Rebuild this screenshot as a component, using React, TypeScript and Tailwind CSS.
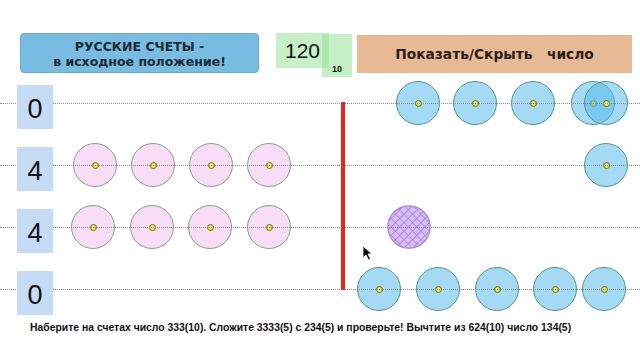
import React from "react";

type Kind = "pink" | "blue" | "hatch";
type Bead = { x: number; kind: Kind };

const ROWS: { value: string; beads: Bead[] }[] = [
  {
    value: "0",
    beads: [
      { x: 418, kind: "blue" },
      { x: 475, kind: "blue" },
      { x: 533, kind: "blue" },
      { x: 593, kind: "blue" },
      { x: 606, kind: "blue" },
    ],
  },
  {
    value: "4",
    beads: [
      { x: 95, kind: "pink" },
      { x: 153, kind: "pink" },
      { x: 211, kind: "pink" },
      { x: 269, kind: "pink" },
      { x: 606, kind: "blue" },
    ],
  },
  {
    value: "4",
    beads: [
      { x: 93, kind: "pink" },
      { x: 152, kind: "pink" },
      { x: 210, kind: "pink" },
      { x: 269, kind: "pink" },
      { x: 409, kind: "hatch" },
    ],
  },
  {
    value: "0",
    beads: [
      { x: 379, kind: "blue" },
      { x: 438, kind: "blue" },
      { x: 497, kind: "blue" },
      { x: 555, kind: "blue" },
      { x: 604, kind: "blue" },
    ],
  },
];

function BeadShape({ bead }: { bead: Bead }) {
  if (bead.kind === "hatch") {
    return (
      <svg className="absolute top-[9px]" style={{ left: bead.x - 22 }} width="44" height="44" viewBox="0 0 44 44">
        <defs>
          <pattern id="hatch" width="6" height="6" patternUnits="userSpaceOnUse" patternTransform="rotate(45)">
            <rect width="6" height="6" fill="#cdc3f7" />
            <path d="M0 0V6M0 0H6" stroke="#c24fcf" strokeWidth="1.2" />
          </pattern>
        </defs>
        <circle cx="22" cy="22" r="21.2" fill="url(#hatch)" stroke="#a984d6" strokeWidth="1.2" />
      </svg>
    );
  }
  const cls =
    bead.kind === "pink"
      ? "bg-[#f9dcf5] border-[#879f8e]"
      : "bg-[rgba(80,184,234,0.52)] border-[#4d9a8b]";
  return (
    <div
      className={`absolute top-[9px] flex size-[44px] items-center justify-center rounded-full border-[1.6px] ${cls}`}
      style={{ left: bead.x - 22 }}
    >
      <div className="size-[7px] rounded-full border-[1.5px] border-[#6b6a1e] bg-[#eef24a]" />
    </div>
  );
}

export default function App() {
  return (
    <div className="relative h-[360px] w-[640px] overflow-hidden bg-white">
      {/* Top bar */}
      <div className="flex h-[72px] items-start pl-[20px] pt-[33px]">
        <button className="flex h-[40px] w-[239px] flex-col items-center justify-center rounded-[4px] border border-[#6aa9d0] bg-[#78bce1] pt-[2px] text-[12.5px] font-bold leading-[15px] text-[#1c2a33] font-['DejaVu_Sans',sans-serif]">
          <span>РУССКИЕ СЧЕТЫ -</span>
          <span>в исходное положение!</span>
        </button>
        <div className="relative ml-[17px] h-[44px] w-[76px]">
          <div className="flex h-[35px] w-[53px] items-center justify-center bg-[#c6f0c6] text-[21px] text-[#111] font-['Liberation_Sans',sans-serif]">
            120
          </div>
          <div className="absolute left-[46px] top-[1px] flex h-[43px] w-[30px] items-end justify-center bg-[rgba(150,226,150,0.55)] pb-[3px] text-[9px] font-bold leading-[10px] text-[#111] font-['Liberation_Sans',sans-serif]">
            10
          </div>
        </div>
        <button className="ml-[5px] mt-[2px] flex h-[38px] w-[275px] items-center justify-center bg-[#e8b995] pt-[1px] text-[13.8px] font-bold text-[#2a1f18] font-['DejaVu_Sans',sans-serif]">
          Показать/Скрыть&nbsp;&nbsp;&nbsp;число
        </button>
      </div>

      {/* Abacus rows */}
      <div className="flex flex-col">
        {ROWS.map((row, i) => (
          <div key={i} className="relative h-[62px]">
            {row.beads.map((b, j) => (
              <BeadShape key={j} bead={b} />
            ))}
            <div className="pointer-events-none absolute left-0 right-0 top-[31px] border-t border-dotted border-[#8a8a8a]" />
            <div className="relative z-10 ml-[17px] mt-[13px] flex h-[44px] w-[36px] items-center justify-center bg-[#c6dcf6] pt-[4px] text-[27px] text-[#111] font-['Liberation_Sans',sans-serif]">
              {row.value}
            </div>
          </div>
        ))}
      </div>

      {/* Bottom task */}
      <p className="mt-[1px] pl-[30px] text-[10.4px] font-bold leading-[14px] text-[#111] font-['Liberation_Sans',sans-serif]">
        Наберите на счетах число 333(10). Сложите 3333(5) с 234(5) и проверьте! Вычтите из 624(10) число 134(5)
      </p>

      {/* Divider */}
      <div className="absolute left-[341px] top-[102px] h-[188px] w-[4px] bg-[#e5231f]" />

      {/* Mouse cursor */}
      <svg className="absolute left-[362px] top-[245px]" width="11" height="16" viewBox="0 0 11 16">
        <path d="M1 1L1 13L4 10L6.5 15L8.5 14L6 9L10 9Z" fill="#111" stroke="#fff" strokeWidth="0.8" />
      </svg>
    </div>
  );
}
